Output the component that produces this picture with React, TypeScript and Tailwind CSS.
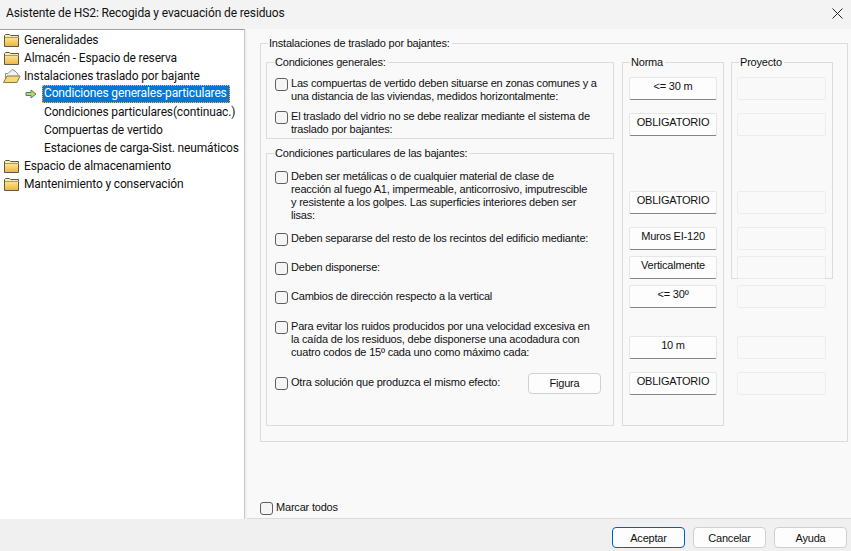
import type { ReactNode } from 'react';

function Folder({ open }: { open?: boolean }) {
  if (open) {
    return (
      <svg width="18" height="16" viewBox="0 0 18 16" className="-ml-[1px] -mr-[1px] shrink-0">
        <path d="M2.5 13.5V5.5H5L9 1.5l3 1.5 3 3v2" fill="#eef1f6" stroke="#8f9094" />
        <path d="M0.5 14.5L4 8h13l-3 6.5z" fill="#f5d77c" stroke="#8a7a40" />
      </svg>
    );
  }
  return (
    <svg width="16" height="16" viewBox="0 0 16 16" className="shrink-0">
      <defs>
        <linearGradient id="folderFill" x1="0" y1="0" x2="0" y2="1">
          <stop offset="0" stopColor="#fff3b8" />
          <stop offset="1" stopColor="#eeb53a" />
        </linearGradient>
      </defs>
      <path d="M0.5 14.5V3.5l1-1h4l1 1h8v11z" fill="url(#folderFill)" stroke="#5f5a48" />
      <path d="M1 5.5h14" stroke="#a89a68" />
    </svg>
  );
}

function TreeItem({ icon, children }: { icon: ReactNode; children: ReactNode }) {
  return (
    <div className="flex h-[18px] items-center gap-[4px] whitespace-nowrap">
      {icon}
      <span>{children}</span>
    </div>
  );
}

function SubItem({ selected, children }: { selected?: boolean; children: ReactNode }) {
  return (
    <div className="flex h-[18px] items-center pl-[19px] whitespace-nowrap">
      <span className="flex w-[19px] shrink-0 pl-[2px]">
        {selected && (
          <svg width="12" height="10" viewBox="0 0 12 10">
            <path d="M1 3.5h5V1l5 4-5 4V6.5H1z" fill="#a8d888" stroke="#5f7f50" />
          </svg>
        )}
      </span>
      <span className={selected ? 'h-[18px] w-[188px] bg-[#0078d7] px-[2px] leading-[17px] text-white outline-1 -outline-offset-1 outline-[#ffb060] outline-dotted' : 'px-[2px]'}>
        {children}
      </span>
    </div>
  );
}

function Group({ title, className, children }: { title: string; className: string; children?: ReactNode }) {
  return (
    <div className={`relative border border-[#dcdcdc] ${className}`}>
      <span className="absolute -top-[8px] left-[7px] bg-[#f9f9f9] pr-[2px] pl-[1px] leading-[15px] whitespace-nowrap text-[#111]">{title}</span>
      {children}
    </div>
  );
}

function Check({ children, className = '' }: { children: ReactNode; className?: string }) {
  return (
    <div className={`flex items-start gap-[3px] ${className}`}>
      <span className="mt-[1px] h-[13px] w-[13px] shrink-0 rounded-[3px] border border-[#5f5f5f] bg-[#f5f5f5]" />
      <span className="leading-[13px] whitespace-nowrap">{children}</span>
    </div>
  );
}

function NormaButton({ label, className }: { label: string; className: string }) {
  return (
    <div className={`flex h-[23px] w-[88px] items-center justify-center rounded-[2px] border border-[#e6e6e6] border-b-[#858585] bg-[#fdfdfd] pb-[4px] text-[#111] ${className}`}>
      {label}
    </div>
  );
}

function ProyectoBox({ className }: { className: string }) {
  return <div className={`h-[23px] w-[89px] rounded-[2px] border border-[#ededed] bg-[#f9f9f9] ${className}`} />;
}

function FooterButton({ label, primary }: { label: string; primary?: boolean }) {
  return (
    <button className={`h-[21px] w-[73px] rounded-[4px] border bg-[#fdfdfd] pt-[1px] text-[#111] ${primary ? 'border-[#005fb8]' : 'border-[#d0d0d0]'}`}>
      {label}
    </button>
  );
}

export default function App() {
  return (
    <div className="flex h-[551px] w-[851px] flex-col overflow-hidden bg-[#f0f0f0] font-['Roboto',sans-serif] text-[12px] text-[#111]">
      <div className="flex h-[29px] shrink-0 items-center justify-between bg-[#f3f3f3] pr-[8px] pb-[3px] pl-[6px]">
        <span className="tracking-[-0.12px]">Asistente de HS2: Recogida y evacuación de residuos</span>
        <svg width="11" height="11" viewBox="0 0 11 11">
          <path d="M0.5 0.5l10 10M10.5 0.5l-10 10" stroke="#222" />
        </svg>
      </div>

      <div className="flex h-[490px] shrink-0">
        <div className="h-full w-[245px] shrink-0 border-t border-r border-[#a0a0a0] border-r-[#c8c8c8] bg-white pt-[1px] pl-[4px] tracking-[-0.15px]">
          <TreeItem icon={<Folder />}>Generalidades</TreeItem>
          <TreeItem icon={<Folder />}>Almacén - Espacio de reserva</TreeItem>
          <TreeItem icon={<Folder open />}>Instalaciones traslado por bajante</TreeItem>
          <SubItem selected>Condiciones generales-particulares</SubItem>
          <SubItem>Condiciones particulares(continuac.)</SubItem>
          <SubItem>Compuertas de vertido</SubItem>
          <SubItem>Estaciones de carga-Sist. neumáticos</SubItem>
          <TreeItem icon={<Folder />}>Espacio de almacenamiento</TreeItem>
          <TreeItem icon={<Folder />}>Mantenimiento y conservación</TreeItem>
        </div>

        <div className="ml-[2px] flex h-full flex-1 flex-col border-b border-[#dcdcdc] bg-[#f9f9f9] pt-[14px] pl-[13px] font-['Liberation_Sans',sans-serif] text-[11px] tracking-[-0.2px]">
          <Group title="Instalaciones de traslado por bajantes:" className="flex h-[399px] w-[588px] gap-[7px] pt-[18px] pl-[5px]">
            <div className="flex w-[348px] flex-col gap-[14px]">
              <Group title="Condiciones generales:" className="h-[77px] pt-[14px] pl-[8px]">
                <Check>
                  Las compuertas de vertido deben situarse en zonas comunes y a<br />
                  una distancia de las viviendas, medidos horizontalmente:
                </Check>
                <Check className="mt-[7px]">
                  El traslado del vidrio no se debe realizar mediante el sistema de<br />
                  traslado por bajantes:
                </Check>
              </Group>
              <Group title="Condiciones particulares de las bajantes:" className="h-[273px] pt-[16px] pl-[8px]">
                <Check>
                  Deben ser metálicas o de cualquier material de clase de<br />
                  reacción al fuego A1, impermeable, anticorrosivo, imputrescible<br />
                  y resistente a los golpes. Las superficies interiores deben ser<br />
                  lisas:
                </Check>
                <Check className="mt-[10px]">Deben separarse del resto de los recintos del edificio mediante:</Check>
                <Check className="mt-[15px]">Deben disponerse:</Check>
                <Check className="mt-[15px]">Cambios de dirección respecto a la vertical</Check>
                <Check className="mt-[16px]">
                  Para evitar los ruidos producidos por una velocidad excesiva en<br />
                  la caída de los residuos, debe disponerse una acodadura con<br />
                  cuatro codos de 15º cada uno como máximo cada:
                </Check>
                <div className="mt-[14px] flex items-center">
                  <Check className="mb-[1px] w-[253px]">Otra solución que produzca el mismo efecto:</Check>
                  <div className="flex h-[21px] w-[73px] items-center justify-center rounded-[4px] border border-[#d0d0d0] bg-[#fdfdfd]">Figura</div>
                </div>
              </Group>
            </div>

            <div className="ml-[1px] flex gap-[7px]">
              <Group title="Norma" className="h-[364px] w-[102px] pl-[6px]">
                <NormaButton label="<= 30 m" className="mt-[14px]" />
                <NormaButton label="OBLIGATORIO" className="mt-[13px]" />
                <NormaButton label="OBLIGATORIO" className="mt-[55px]" />
                <NormaButton label="Muros EI-120" className="mt-[13px]" />
                <NormaButton label="Verticalmente" className="mt-[6px]" />
                <NormaButton label="<= 30º" className="mt-[6px]" />
                <NormaButton label="10 m" className="mt-[28px]" />
                <NormaButton label="OBLIGATORIO" className="mt-[13px]" />
              </Group>

              <Group title="Proyecto" className="h-[217px] w-[102px] pl-[5px]">
                <ProyectoBox className="mt-[14px]" />
                <ProyectoBox className="mt-[13px]" />
                <ProyectoBox className="mt-[55px]" />
                <ProyectoBox className="mt-[13px]" />
                <ProyectoBox className="mt-[6px]" />
                <ProyectoBox className="mt-[6px]" />
                <ProyectoBox className="mt-[28px]" />
                <ProyectoBox className="mt-[13px]" />
              </Group>
            </div>
          </Group>
          <Check className="mt-[59px]">Marcar todos</Check>
        </div>
      </div>

      <div className="flex flex-1 items-start justify-end gap-[8px] pt-[8px] pr-[4px] font-['Liberation_Sans',sans-serif] text-[11px] tracking-[-0.2px]">
        <FooterButton label="Aceptar" primary />
        <FooterButton label="Cancelar" />
        <FooterButton label="Ayuda" />
      </div>
    </div>
  );
}
